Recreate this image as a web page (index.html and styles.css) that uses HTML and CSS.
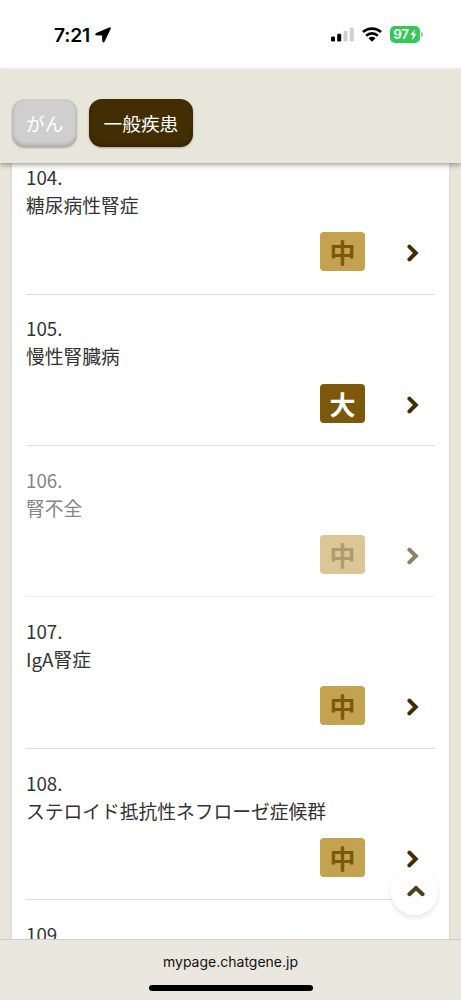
FILE: index.html
```html
<!DOCTYPE html>
<html lang="ja">
<head>
<meta charset="utf-8">
<title>一般疾患</title>
<link rel="stylesheet" href="styles.css">
</head>
<body>
<div class="screen">
  <header class="status">
    <div class="clock"><span class="time">7:21</span>
      <svg class="location" viewBox="0 0 16 16"><path stroke="#000" stroke-width=".9" stroke-linejoin="round" d="M14.8.7 1.2 6.5c-.9.4-.7 1.4.2 1.4l6.2.2.2 6.2c0 .9 1 1.1 1.4.2L15.4 1.4c.2-.5-.1-.9-.6-.7z"/></svg>
    </div>
    <div class="indicators">
      <svg class="signal" viewBox="0 0 23 15"><rect x="0" y="9.5" width="4" height="5" rx="1.2"/><rect x="6.2" y="6.7" width="4" height="7.8" rx="1.2"/><g fill="#d0d0d0"><rect x="12.5" y="3.8" width="4" height="10.7" rx="1.2"/><rect x="18.7" y=".5" width="4" height="14" rx="1.2"/></g></svg>
      <svg class="wifi" viewBox="0 0 20 15"><g fill="none" stroke="#000" stroke-width="2.7"><path d="M1 5.1C6 .4 14 .4 19 5.1"/><path d="M4.2 8.7c3.3-3.1 8.3-3.1 11.6 0"/></g><path d="M6.5 11.2c2-1.8 5-1.8 7 0L10 14.7z"/></svg>
      <div class="battery"><span>97</span><svg class="bolt" viewBox="0 0 7 11"><path d="M4.8 0 .3 6.1h2.6L2.1 11l4.6-6.3H4z" fill="#fff"/></svg></div>
      <i class="battery-tip"></i>
    </div>
  </header>
  <nav class="tabs">
    <button class="tab tab-muted">がん</button>
    <button class="tab tab-active">一般疾患</button>
  </nav>
  <main class="content">
    <ol class="list">
      <li class="row"><p>104.</p><p>糖尿病性腎症</p><div class="result"><span class="badge">中</span><svg class="chevron" viewBox="0 0 12 18"><path d="m2.4 2.6 6.4 6.4-6.4 6.4"/></svg></div></li>
      <li class="row"><p>105.</p><p>慢性腎臓病</p><div class="result"><span class="badge badge-high">大</span><svg class="chevron" viewBox="0 0 12 18"><path d="m2.4 2.6 6.4 6.4-6.4 6.4"/></svg></div></li>
      <li class="row row-read"><p>106.</p><p>腎不全</p><div class="result"><span class="badge">中</span><svg class="chevron" viewBox="0 0 12 18"><path d="m2.4 2.6 6.4 6.4-6.4 6.4"/></svg></div></li>
      <li class="row"><p>107.</p><p>IgA腎症</p><div class="result"><span class="badge">中</span><svg class="chevron" viewBox="0 0 12 18"><path d="m2.4 2.6 6.4 6.4-6.4 6.4"/></svg></div></li>
      <li class="row"><p>108.</p><p>ステロイド抵抗性ネフローゼ症候群</p><div class="result"><span class="badge">中</span><svg class="chevron" viewBox="0 0 12 18"><path d="m2.4 2.6 6.4 6.4-6.4 6.4"/></svg></div></li>
      <li class="row"><p>109.</p></li>
    </ol>
    <button class="to-top" aria-label="トップへ"><svg viewBox="0 0 18 12"><path d="m2.4 9.2 6.6-6.2 6.6 6.2"/></svg></button>
  </main>
  <footer class="browser-bar">
    <span class="address">mypage.chatgene.jp</span>
    <i class="home"></i>
  </footer>
</div>
</body>
</html>
```
FILE: styles.css
```css
* { box-sizing: border-box; }
body, p, ol { margin: 0; padding: 0; }
body { font-family: "Noto Sans CJK JP", sans-serif; color: #333; background: #e8e5da; }
button { font: inherit; border: 0; padding: 0; }
.screen { height: 1000px; display: flex; flex-direction: column; overflow: hidden; }

.status { height: 69px; flex: none; display: flex; justify-content: space-between; padding: 0 38px 0 54px; background: #fff; }
.clock { display: flex; align-items: center; gap: 5px; color: #000; font: 600 19.3px/68px Inter, sans-serif; }
.time { letter-spacing: -.2px; }
.location { width: 16px; height: 16px; }
.indicators { display: flex; align-items: center; height: 68px; }
.signal { width: 23px; height: 15px; margin-right: 8px; }
.wifi { width: 20px; height: 15px; margin-right: 8px; }
.battery { width: 30px; height: 17px; border-radius: 5px; background: #35c759; color: #fff; display: flex; align-items: center; justify-content: center; gap: 1px; font: 600 13.5px/17px Inter, sans-serif; letter-spacing: -.4px; }
.bolt { width: 7px; height: 11px; }
.battery-tip { width: 2px; height: 5px; margin-left: 1px; border-radius: 0 2px 2px 0; background: #b5b5b5; }

.tabs { height: 94px; flex: none; display: flex; gap: 12px; padding: 29.5px 12px 0; background: #e8e5da; box-shadow: 0 2px 5px rgba(0,0,0,.36); position: relative; z-index: 1; }
.tab { height: 48px; border-radius: 13px; color: #fff; font-size: 18.7px; line-height: 47px; }
.tab-muted { width: 65.3px; background: #cfcfcf; box-shadow: inset 0 -2px 4px rgba(0,0,0,.2), 0 1px 2px rgba(0,0,0,.25); }
.tab-active { width: 103.3px; background: #432d03; box-shadow: inset 0 -2px 4px rgba(0,0,0,.25), 0 1px 2px rgba(0,0,0,.3); }

.content { flex: 1; min-height: 0; padding: 0 12px; overflow: hidden; position: relative; }
.list { height: 820px; margin-top: -19.8px; padding: 0 14px; list-style: none; background: #fff; box-shadow: 0 0 3px rgba(0,0,0,.1); }
.row { height: 151.4px; padding-top: 19.8px; border-bottom: 1px solid #dedede; font-size: 18.75px; line-height: 28.1px; }
.row-read { border-bottom-color: #eee; }
.row-read > p { opacity: .6; }
.row-read .result { opacity: .6; }
.result { display: flex; justify-content: flex-end; align-items: center; padding-right: 16px; margin-top: 13.1px; }
.badge { width: 45px; height: 39px; margin-right: 42px; border-radius: 4px; background: #c3a250; color: #7c580d; text-align: center; font-size: 26px; font-weight: 700; line-height: 39px; }
.badge-high { background: #7c580d; color: #fff; }
.chevron { width: 12px; height: 18px; margin-top: 3px; }
.chevron path, .to-top path { fill: none; stroke: #432d03; stroke-width: 4; stroke-linecap: round; stroke-linejoin: miter; }
.to-top { position: absolute; right: 23px; bottom: 24px; width: 47px; height: 47px; border-radius: 50%; display: flex; justify-content: center; padding: 17px 0 0 2px; background: rgba(255,255,255,.96); box-shadow: 0 3px 5px rgba(0,0,0,.1); }
.to-top svg { width: 18px; height: 12px; }
.to-top path { stroke: #50401a; }

.browser-bar { height: 61px; flex: none; display: flex; flex-direction: column; align-items: center; padding-top: 11px; background: #eae8de; border-top: 1px solid #cfccc3; }
.address { color: #111; font: 14px/22px Inter, sans-serif; }
.home { width: 164px; height: 6px; margin-top: 12px; border-radius: 3px; background: #000; }
```
